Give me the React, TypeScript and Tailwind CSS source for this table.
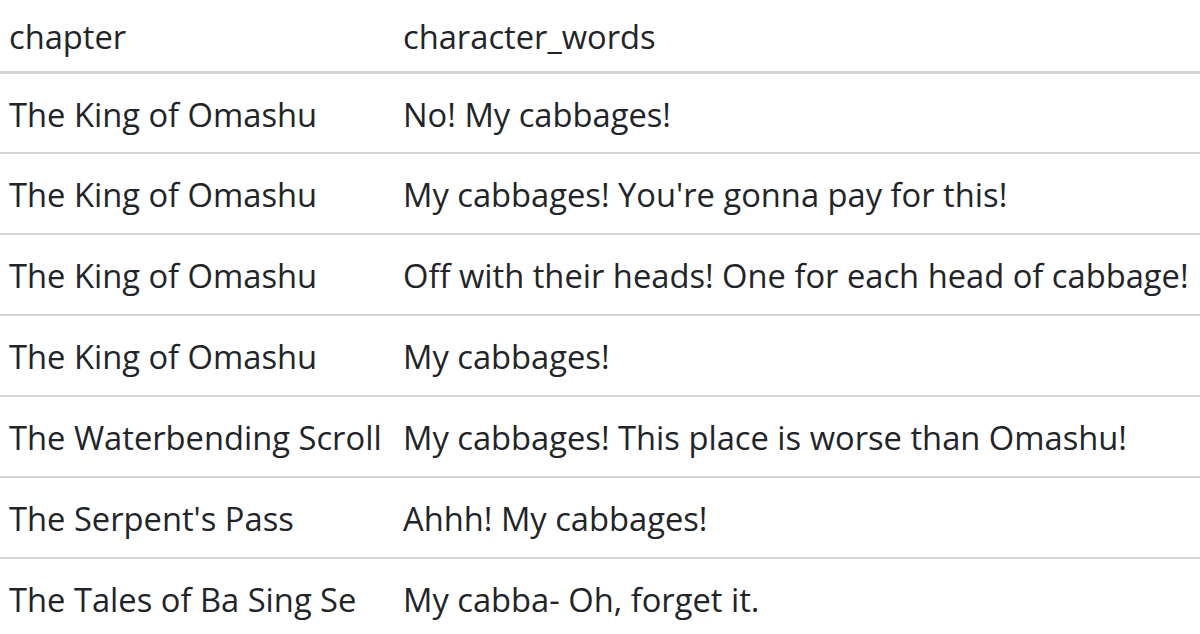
const rows: [string, string][] = [
  ["The King of Omashu", "No! My cabbages!"],
  ["The King of Omashu", "My cabbages! You're gonna pay for this!"],
  ["The King of Omashu", "Off with their heads! One for each head of cabbage!"],
  ["The King of Omashu", "My cabbages!"],
  ["The Waterbending Scroll", "My cabbages! This place is worse than Omashu!"],
  ["The Serpent's Pass", "Ahhh! My cabbages!"],
  ["The Tales of Ba Sing Se", "My cabba- Oh, forget it."],
];

export default function App() {
  return (
    <div className="h-[634px] w-[1200px] overflow-hidden bg-white font-['Open_Sans',sans-serif] text-[32.7px] text-[#212529]">
      <table className="w-[1240px] table-fixed border-collapse text-left">
        <colgroup>
          <col className="w-[394px]" />
          <col />
        </colgroup>
        <thead>
          <tr className="h-[72px] border-b-[3px] border-[#d4d4d4]">
            <th className="whitespace-nowrap pl-[9px] pt-[3px] align-middle font-normal">chapter</th>
            <th className="whitespace-nowrap pl-[9px] pt-[3px] align-middle font-normal">character_words</th>
          </tr>
        </thead>
        <tbody>
          {rows.map(([c, w], i) => (
            <tr key={i} className="h-[81px] border-b-2 border-[#d4d4d4]">
              <td className="whitespace-nowrap pl-[9px] pt-[3px] align-middle">{c}</td>
              <td className="whitespace-nowrap pl-[9px] pt-[3px] align-middle">{w}</td>
            </tr>
          ))}
        </tbody>
      </table>
    </div>
  );
}
